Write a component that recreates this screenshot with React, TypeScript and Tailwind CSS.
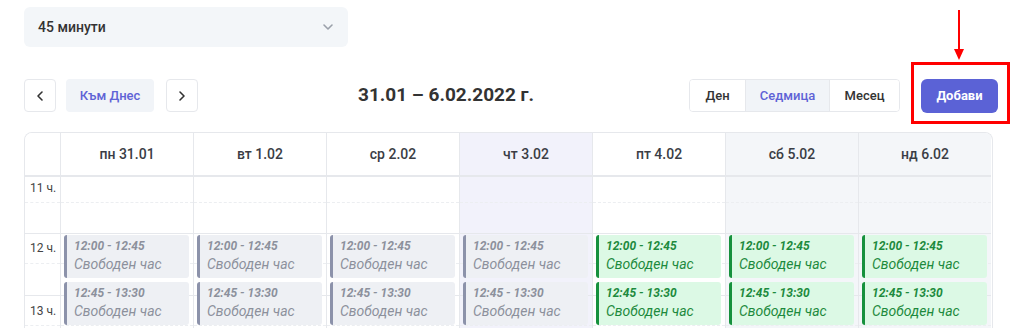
import React from 'react';

type Day = { label: string; bg: string; free: boolean };

const days: Day[] = [
  { label: 'пн 31.01', bg: 'bg-white', free: false },
  { label: 'вт 1.02', bg: 'bg-white', free: false },
  { label: 'ср 2.02', bg: 'bg-white', free: false },
  { label: 'чт 3.02', bg: 'bg-[#f2f2fb]', free: false },
  { label: 'пт 4.02', bg: 'bg-white', free: true },
  { label: 'сб 5.02', bg: 'bg-[#f4f6f9]', free: true },
  { label: 'нд 6.02', bg: 'bg-[#f4f6f9]', free: true },
];

const slots = [
  { time: '12:00 - 12:45', top: 'top-[58px]' },
  { time: '12:45 - 13:30', top: 'top-[105px]' },
];

const Chevron = ({ dir }: { dir: 'left' | 'right' | 'down' }) => {
  const d = dir === 'left' ? 'M10 4 6 8l4 4' : dir === 'right' ? 'M6 4l4 4-4 4' : 'M4 6l4 4 4-4';
  return (
    <svg width="16" height="16" viewBox="0 0 16 16" fill="none" stroke="currentColor" strokeWidth="1.6" strokeLinecap="round" strokeLinejoin="round">
      <path d={d} />
    </svg>
  );
};

const Slots = () => (
  <>
    <div className="h-[26px] border-b border-dashed border-[#eceef1]" />
    <div className="h-[31px] border-b border-[#e6e8ec]" />
    <div className="h-[30px] border-b border-dashed border-[#eceef1]" />
    <div className="h-[32px] border-b border-[#e6e8ec]" />
    <div className="h-[30px] border-b border-dashed border-[#eceef1]" />
    <div className="h-[30px]" />
  </>
);

const DayColumn = ({ day }: { day: Day }) => (
  <div className={`flex flex-col border-l border-[#e6e8ec] ${day.bg}`}>
    <div className="flex h-[44px] items-center justify-center border-b-2 border-[#e6e8ec] text-sm font-medium text-[#3a3d45]">
      {day.label}
    </div>
    <div className="relative">
      <Slots />
      {slots.map((s) => (
        <div
          key={s.time}
          className={`absolute left-[3px] right-[4px] h-[43px] rounded-[3px] border-l-[3px] pl-[7px] pt-[3px] italic ${s.top} ${
            day.free
              ? 'border-[#16913d] bg-[#dcf9e5] text-[#1d8a3d]'
              : 'border-[#8c92aa] bg-[#eef0f4] text-[#8c909c]'
          }`}
        >
          <div className="text-xs font-bold leading-4">{s.time}</div>
          <div className="text-sm leading-5">Свободен час</div>
        </div>
      ))}
    </div>
  </div>
);

export default function App() {
  return (
    <div className="h-[328px] overflow-hidden bg-white px-6 font-['Roboto',sans-serif] text-[#333]">
      <div className="mt-[7px] flex h-10 w-[324px] items-center justify-between rounded-md bg-[#f3f6f9] pl-[14px] pr-3">
        <span className="text-sm font-medium text-[#333]">45 минути</span>
        <span className="text-[#9aa0aa]">
          <Chevron dir="down" />
        </span>
      </div>

      <div className="mt-8 flex h-[33px] items-center">
        <div className="flex items-center gap-[10px]">
          <button className="flex h-[33px] w-8 items-center justify-center rounded border border-[#e6e8ec] bg-white text-[#333]">
            <Chevron dir="left" />
          </button>
          <button className="h-[33px] w-[88px] rounded bg-[#f1f4f8] text-[13px] font-medium text-[#5f63d6]">Към Днес</button>
          <button className="ml-[2px] flex h-[33px] w-8 items-center justify-center rounded border border-[#e6e8ec] bg-white text-[#333]">
            <Chevron dir="right" />
          </button>
        </div>
        <h2 className="ml-[160px] text-[19px] font-bold text-[#333]">31.01 – 6.02.2022 г.</h2>
        <div className="ml-auto mr-[2px] flex items-center">
          <div className="flex h-[33px] overflow-hidden rounded border border-[#e6e8ec] text-[13px] font-medium">
            <button className="w-[55px] bg-white text-[#333]">Ден</button>
            <button className="w-[85px] border-x border-[#e6e8ec] bg-[#f1f4f8] text-[#5f63d6]">Седмица</button>
            <button className="w-[69px] bg-white text-[#333]">Месец</button>
          </div>
          <div className="relative ml-[21px]">
            <button className="h-[34px] w-[77px] rounded-md bg-[#5b62d6] text-[13px] font-bold text-white">Добави</button>
            <div className="absolute -left-[10px] -right-[12px] -top-[17px] -bottom-[11px] border-[3px] border-[#ff0000]" />
            <svg className="absolute -top-[69px] left-[30px]" width="16" height="52" viewBox="0 0 16 52">
              <line x1="8" y1="0" x2="8" y2="40" stroke="#ff0000" strokeWidth="2" />
              <path d="M3 39 L13 39 L8 50 Z" fill="#ff0000" />
            </svg>
          </div>
        </div>
      </div>

      <div className="mt-5 grid w-[969px] grid-cols-[35px_repeat(7,133px)] overflow-hidden rounded-t-lg border border-b-0 border-[#e6e8ec]">
        <div className="flex flex-col bg-white">
          <div className="h-[44px] border-b-2 border-[#e6e8ec]" />
          <div className="relative text-xs text-[#444]">
            <Slots />
            <span className="absolute left-[5px] top-[3px]">11 ч.</span>
            <span className="absolute left-[5px] top-[63px]">12 ч.</span>
            <span className="absolute left-[5px] top-[126px]">13 ч.</span>
          </div>
        </div>
        {days.map((d) => (
          <DayColumn key={d.label} day={d} />
        ))}
      </div>
    </div>
  );
}
